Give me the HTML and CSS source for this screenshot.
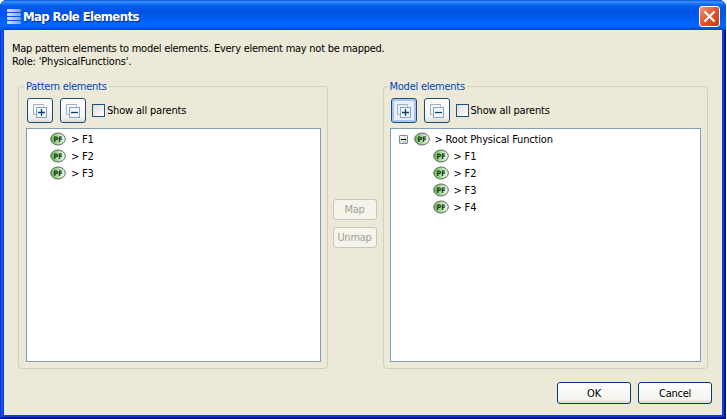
FILE: index.html
```html
<!DOCTYPE html>
<html lang="en">
<head>
<meta charset="utf-8">
<title>Map Role Elements</title>
<link rel="stylesheet" href="styles.css">
</head>
<body>
<svg width="0" height="0" class="defs" aria-hidden="true">
  <defs>
    <linearGradient id="green" x1="0" x2="1"><stop offset="0" stop-color="#62b554"/><stop offset=".55" stop-color="#b4dfa6"/><stop offset="1" stop-color="#f5fcf2"/></linearGradient>
    <linearGradient id="bar" x1="0" x2="1"><stop offset="0" stop-color="#dbe8fb"/><stop offset="1" stop-color="#7d9ccc"/></linearGradient>
    <symbol id="pf" viewBox="0 0 16 14">
      <ellipse cx="8" cy="7" rx="7.300" ry="6" fill="url(#green)" stroke="#5d695b" stroke-width="1"/>
      <text x="3.500" y="9.900" class="pf-text" textLength="9" lengthAdjust="spacingAndGlyphs">PF</text>
    </symbol>
    <symbol id="expand" viewBox="0 0 14 14">
      <path d="M.5 10.500V.5H10.500V2.500M.5 10.500H2.500" fill="none" stroke="#9db0cb"/>
      <rect x="3.500" y="3.500" width="10" height="10" fill="#f3f8fd" stroke="#8ba3c4"/>
      <path d="M5 8.500H12M8.500 5V12" stroke="#0d4174" stroke-width="1.300"/>
    </symbol>
    <symbol id="collapse" viewBox="0 0 14 14">
      <path d="M.5 10.500V.5H10.500V2.500M.5 10.500H2.500" fill="none" stroke="#9db0cb"/>
      <rect x="3.500" y="3.500" width="10" height="10" fill="#f3f8fd" stroke="#8ba3c4"/>
      <path d="M5 8.500H12" stroke="#0d4174" stroke-width="1.300"/>
    </symbol>
  </defs>
</svg>
<div class="window">
  <header class="titlebar">
    <svg class="app-icon" width="15" height="16" viewBox="0 0 15 16"><g fill="url(#bar)"><rect x="0" y="0" width="14" height="3" rx="1"/><rect x="0" y="4" width="14" height="3" rx="1"/><rect x="0" y="8" width="14" height="3" rx="1"/><rect x="0" y="12" width="14" height="3" rx="1"/></g></svg>
    <h1><span>Map Role Elements</span></h1>
    <button class="close" aria-label="Close"><svg width="19" height="19" viewBox="0 0 19 19"><path d="M4.500 4.500L14.500 14.500M14.500 4.500L4.500 14.500" stroke="#fff" stroke-width="2.200"/></svg></button>
  </header>
  <main class="content">
    <p class="message">Map pattern elements to model elements. Every element may not be mapped.<br><span class="role">Role: 'PhysicalFunctions'.</span></p>
    <div class="panels">
      <section class="group">
        <h2>Pattern elements</h2>
        <div class="toolbar">
          <button class="tool"><svg width="14" height="14"><use href="#expand"/></svg></button>
          <button class="tool"><svg width="14" height="14"><use href="#collapse"/></svg></button>
          <label class="check"><i></i><span>Show all parents</span></label>
        </div>
        <ul class="tree">
          <li class="leaf"><svg width="16" height="14"><use href="#pf"/></svg><span>&gt; F1</span></li>
          <li class="leaf"><svg width="16" height="14"><use href="#pf"/></svg><span>&gt; F2</span></li>
          <li class="leaf"><svg width="16" height="14"><use href="#pf"/></svg><span>&gt; F3</span></li>
        </ul>
      </section>
      <div class="actions">
        <button class="btn disabled" disabled><span>Map</span></button>
        <button class="btn disabled" disabled><span>Unmap</span></button>
      </div>
      <section class="group">
        <h2>Model elements</h2>
        <div class="toolbar">
          <button class="tool focused"><svg width="14" height="14"><use href="#expand"/></svg></button>
          <button class="tool"><svg width="14" height="14"><use href="#collapse"/></svg></button>
          <label class="check"><i></i><span>Show all parents</span></label>
        </div>
        <ul class="tree">
          <li class="root"><b class="twisty"></b><svg width="16" height="14"><use href="#pf"/></svg><span>&gt; Root Physical Function</span></li>
          <li class="child"><svg width="16" height="14"><use href="#pf"/></svg><span>&gt; F1</span></li>
          <li class="child"><svg width="16" height="14"><use href="#pf"/></svg><span>&gt; F2</span></li>
          <li class="child"><svg width="16" height="14"><use href="#pf"/></svg><span>&gt; F3</span></li>
          <li class="child"><svg width="16" height="14"><use href="#pf"/></svg><span>&gt; F4</span></li>
        </ul>
      </section>
    </div>
    <footer class="footer">
      <button class="btn wide"><span>OK</span></button>
      <button class="btn wide"><span>Cancel</span></button>
    </footer>
  </main>
</div>
</body>
</html>
```

FILE: styles.css
```css
* { box-sizing: border-box; }
body { margin: 0; background: #fff; overflow: hidden; font: 11px/13px "DejaVu Sans Condensed", "DejaVu Sans", sans-serif; font-stretch: condensed; letter-spacing: -0.25px; color: #000; }
.defs { position: absolute; }
button { padding: 0; font: inherit; letter-spacing: inherit; }
svg { display: block; flex: none; }
.window {
  width: 726px; height: 419px; padding: 0 4px 4px; border-radius: 7px 7px 0 0;
  background: #0a3fdc;
  box-shadow: inset 1px 0 #0831d9, inset -2px 0 #001490, inset 0 -2px #001490, inset 3px 0 #0a55ee;
}
.titlebar {
  display: flex; align-items: center; height: 30px; margin: 0 -4px; padding: 3px 6px 0 7px;
  border-radius: 7px 7px 0 0;
  background: linear-gradient(#0a53d8 0, #3c94ff 2px, #1070f7 4px, #0259e8 7px, #0054e3 13px, #0060f8 21px, #0068ff 26px, #0056e6 28px, #0045cc 30px);
}
.titlebar h1 { flex: 1; margin: 0 0 0 1px; font-size: 13px; line-height: 18px; font-weight: bold; letter-spacing: -0.6px; color: #fff; text-shadow: 1px 1px #0a2a8a; }
.close { width: 21px; height: 21px; border: 1px solid #fff; border-radius: 3px; background: linear-gradient(135deg, #f0967c, #e2552c 50%, #c83c12); }
.content { height: 385px; padding: 12px 14px 0; background: #ece9d8; }
.message { height: 38px; margin: 0 0 0 -6px; }
.role { letter-spacing: -0.17px; }
.panels { display: flex; height: 289px; }
.group { position: relative; width: 310px; padding: 18px 7px 7px 8px; }
.group:last-child { width: 326px; padding-left: 7px; }
.group:last-child h2 { left: 5px; }
.group::before { content: ""; position: absolute; inset: 6px 0 0; border: 1px solid #d0d0bf; border-radius: 4px; }
.group h2 { position: absolute; top: 0; left: 6px; margin: 0; padding: 0 2px; background: #ece9d8; font-size: 11px; font-weight: normal; color: #0046b5; }
.group > div, .group > ul { position: relative; }
.toolbar { display: flex; align-items: center; gap: 7px; height: 25px; padding-left: 1px; letter-spacing: -0.18px; }
.tool { display: flex; align-items: center; justify-content: center; width: 26px; height: 25px; border: 1px solid #1c4b78; border-radius: 3px; background: linear-gradient(#fff, #f3f3ee 80%, #dddbcf); }
.focused { box-shadow: inset 0 0 0 2px #a8c3ef; background: #e8eefb; }
.check { display: flex; align-items: center; gap: 2px; margin-left: -1px; }
.check i { width: 13px; height: 13px; border: 1px solid #1c5180; background: linear-gradient(135deg, #dcdcd7, #fff); }
.tree { height: 234px; margin: 5px 0 0; padding: 2px 0; list-style: none; border: 1px solid #7f9db9; background: #fff; letter-spacing: -0.17px; }
.tree li { display: flex; align-items: center; height: 17px; gap: 5px; }
.tree li > svg { margin-top: -2px; }
.leaf { padding-left: 23px; }
.root { padding-left: 8px; }
.child { padding-left: 42px; }
.twisty { position: relative; width: 9px; height: 9px; margin: -1px 1px 0 0; border: 1px solid #7b8ea8; border-radius: 1px; background: linear-gradient(135deg, #fff, #c9c3b5); }
.twisty::after { content: ""; position: absolute; left: 1px; top: 3px; width: 5px; height: 1px; background: #000; }
.pf-text { font: bold 7.500px "DejaVu Sans", sans-serif; letter-spacing: 0; fill: #16301a; }
.actions { display: flex; flex-direction: column; gap: 7px; width: 55px; padding: 119px 6px 0 5px; }
.btn { height: 21px; border: 1px solid #003c74; border-radius: 3px; color: #000; background: linear-gradient(#fff, #f4f4f0 80%, #dedccf); line-height: 17px; }
.disabled { width: 44px; border-color: #c9c7ba; background: #f5f4ea; color: #a1a192; }
.footer { display: flex; justify-content: flex-end; gap: 7px; margin: 13px -4px 0 0; }
.wide { width: 74px; height: 22px; }
```
